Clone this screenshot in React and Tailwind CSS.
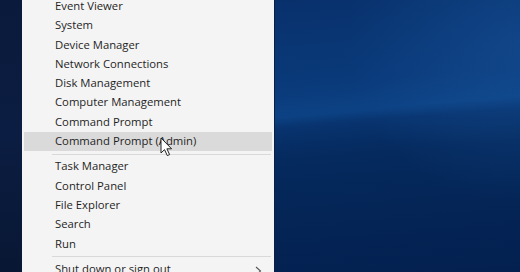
import React from "react";

const top = ["Event Viewer","System","Device Manager","Network Connections","Disk Management","Computer Management","Command Prompt","Command Prompt (Admin)"];
const mid = ["Task Manager","Control Panel","File Explorer","Search","Run"];

function Row({ label, active, chevron }) {
  return (
    <div className={"relative flex h-[19.3px] shrink-0 items-center pl-[31px] pr-3 " + (active ? "bg-[#dadada]" : "")}>
      <span className="whitespace-nowrap">{label}</span>
      {chevron && (
        <svg className="absolute right-[10px] top-[6px]" width="7" height="10" viewBox="0 0 7 10">
          <path d="M1 1 L5.5 5 L1 9" fill="none" stroke="#555" strokeWidth="1.1" />
        </svg>
      )}
    </div>
  );
}

export default function App() {
  return (
    <div className="relative flex h-[272px] w-[520px] overflow-hidden font-['Open_Sans',sans-serif] text-[11.3px] text-[#1f1f1f]">
      <div className="w-[22px] shrink-0 bg-[linear-gradient(180deg,#0a1a3c_0%,#0b1d42_50%,#081733_100%)]" />
      <div className="flex w-[252px] shrink-0 flex-col bg-[#f4f4f4] px-[2px]">
        <div className="-mt-[3.2px] flex shrink-0 flex-col">
          {top.map((t, i) => (
            <Row key={t} label={t} active={i === 7} />
          ))}
        </div>
        <div className="flex h-[6px] shrink-0 items-center pl-[28px] pr-[1px]">
          <div className="h-px w-full bg-[#d9d9d9]" />
        </div>
        {mid.map((t) => (
          <Row key={t} label={t} />
        ))}
        <div className="flex h-[6px] shrink-0 items-center pl-[28px] pr-[1px]">
          <div className="h-px w-full bg-[#d9d9d9]" />
        </div>
        <Row label="Shut down or sign out" chevron />
      </div>
      <div className="relative flex-1 border-l border-[#0a1f45] bg-[linear-gradient(175deg,#08316c_0%,#0a3a7a_30%,#0c4284_40%,#08336e_44%,#052a5e_55%,#042556_75%,#032050_100%)]">
        <div className="absolute inset-0 bg-[radial-gradient(ellipse_at_100%_15%,rgba(30,95,170,0.35),transparent_50%)]" />
      </div>
      <svg className="absolute left-[160px] top-[137px]" width="14" height="20" viewBox="0 0 14 20">
        <path d="M1 1 L1 16 L4.5 12.6 L7.3 18.6 L9.6 17.6 L6.9 11.8 L11.6 11.8 Z" fill="#fff" stroke="#222" strokeWidth="1" strokeLinejoin="round" />
      </svg>
    </div>
  );
}
